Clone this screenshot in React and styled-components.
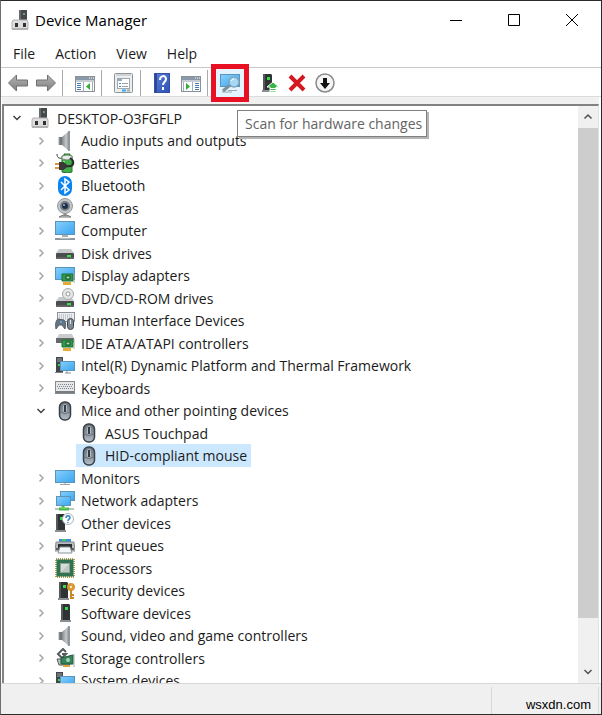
import React from "react";
import styled, { createGlobalStyle } from "styled-components";

const Color = {
  TEXT: "#1b1b1b",
  LINE: "#c8c8c8",
  FACE: "#f0f0f0",
  EDGE: "#828282",
  FRAME: "#2b2b2b",
  SELECTED: "#cce8ff",
  HOVER: "#e5f3ff",
  MARK: "#e81123",
};

const GlobalStyle = createGlobalStyle`
  * {
    box-sizing: border-box;
  }
  body {
    margin: 0;
    color: ${Color.TEXT};
    font-family: "Open Sans", "Noto Sans", sans-serif;
    font-size: 14px;
  }
  button {
    padding: 0;
    border: 0;
    background: none;
    color: inherit;
    font: inherit;
  }
  svg {
    display: block;
    flex: none;
  }
`;

const Window = styled.div`
  display: flex;
  flex-direction: column;
  height: 100vh;
  overflow: hidden;
  background: white;
  border: 1px solid ${Color.FRAME};
  border-left-color: #6e6e6e;
`;

const TitleBar = styled.header`
  display: flex;
  align-items: center;
  height: 38px;
  flex: none;
  padding-left: 10px;
`;

const Title = styled.h1`
  margin: 0;
  padding-left: 4px;
  flex: 1;
  color: black;
  font-size: 15px;
  font-weight: 400;
`;

const CaptionButton = styled.button`
  display: flex;
  align-items: center;
  justify-content: center;
  width: 58px;
  height: 38px;
`;

const MenuBar = styled.nav`
  display: flex;
  align-items: center;
  gap: 20px;
  height: 28px;
  flex: none;
  padding: 2px 0 0 12px;
`;

const MenuItem = styled.button`
  line-height: 20px;
`;

const ToolBar = styled.div`
  display: flex;
  align-items: center;
  gap: 8px;
  height: 30px;
  flex: none;
  padding: 1px 0 0 7px;
  border-top: 1px solid ${Color.LINE};
  border-bottom: 1px solid #dcdcdc;
`;

const ToolButton = styled.button`
  position: relative;
  width: 20px;
  height: 20px;
`;

const MarkedButton = styled(ToolButton)`
  background: ${Color.HOVER};
  box-shadow: 0 0 0 4px ${Color.HOVER};
  &::after {
    content: "";
    position: absolute;
    inset: -9px;
    border: 5px solid ${Color.MARK};
  }
`;

const Separator = styled.span`
  width: 1px;
  height: 26px;
  margin: 0 4px 0 -2px;
  background: ${(props) => (props.$blank ? "transparent" : "#a9a9a9")};
`;

const Tooltip = styled.span`
  position: absolute;
  z-index: 2;
  top: 37px;
  left: 17px;
  padding: 0 4px 0 7px;
  border: 1px solid #808080;
  background: white;
  box-shadow: 2px 2px 0 #b4b4b4;
  color: #646464;
  line-height: 25px;
  white-space: nowrap;
`;

const Content = styled.main`
  display: flex;
  flex: 1;
  min-height: 0;
  margin: 0 2px 0 1px;
  border-top: 7px solid ${Color.FACE};
`;

const Pane = styled.div`
  display: flex;
  flex: 1;
  min-width: 0;
  border-top: 2px solid ${Color.EDGE};
  border-left: 2px solid ${Color.EDGE};
  border-right: 1px solid #e3e3e3;
`;

const Tree = styled.ul`
  flex: 1;
  margin: 0;
  padding: 1px 0 0;
  overflow: hidden;
  list-style: none;
`;

const Row = styled.li`
  display: flex;
  align-items: center;
  height: 22px;
  padding-left: ${(props) => 6 + props.$level * 24}px;
  &:nth-child(even) {
    height: 23px;
  }
`;

const Expander = styled.button`
  display: flex;
  justify-content: center;
  width: 14px;
  margin-right: 4px;
`;

const Item = styled.span`
  display: flex;
  align-items: center;
  gap: 6px;
  height: 100%;
  padding: 0 4px 0 3px;
  background: ${(props) => (props.$selected ? Color.SELECTED : "none")};
  white-space: nowrap;
`;

const ScrollBar = styled.div`
  display: flex;
  flex-direction: column;
  width: 20px;
  background: ${Color.FACE};
`;

const ScrollButton = styled.button`
  display: flex;
  align-items: center;
  justify-content: center;
  height: 22px;
`;

const Track = styled.div`
  flex: 1;
`;

const Thumb = styled.div`
  height: 92%;
  background: #cdcdcd;
`;

const StatusBar = styled.footer`
  display: flex;
  height: 31px;
  flex: none;
  padding: 3px 2px 0 0;
  background: ${Color.FACE};
  border-top: 1px solid #d7d7d7;
`;

const StatusCell = styled.div`
  flex: ${(props) => (props.$wide ? "1" : "0 0 107px")};
  padding: 9px 7px 0 0;
  border-right: 1px solid #d9d9d9;
  color: black;
  font-family: "Liberation Sans", Arial, sans-serif;
  font-size: 13px;
  line-height: 18px;
  text-align: right;
`;

const Svg = ({ children, size = 20 }) => (
  <svg width={size} height={size} viewBox={`0 0 ${size} ${size}`} aria-hidden="true">
    {children}
  </svg>
);

const Defs = styled.svg`
  position: absolute;
`;

const Gradients = () => (
  <Defs width="0" height="0" aria-hidden="true">
    <defs>
      <linearGradient id="screen" x1="0" y1="0" x2="1" y2="1">
        <stop offset="0" stopColor="#86d0fc" />
        <stop offset="1" stopColor="#3aa5f0" />
      </linearGradient>
      <linearGradient id="metal" x1="0" y1="0" x2="1" y2="0">
        <stop offset="0" stopColor="#85898d" />
        <stop offset="0.6" stopColor="#c3c8cc" />
        <stop offset="1" stopColor="#868b90" />
      </linearGradient>
      <linearGradient id="mouse" x1="0" y1="0" x2="0" y2="1">
        <stop offset="0" stopColor="#6d7680" />
        <stop offset="0.5" stopColor="#87929d" />
        <stop offset="1" stopColor="#b5c0ca" />
      </linearGradient>
      <linearGradient id="arrow" x1="0" y1="0" x2="0" y2="1">
        <stop offset="0" stopColor="#b5b5b5" />
        <stop offset="1" stopColor="#7e7e7e" />
      </linearGradient>
      <linearGradient id="help" x1="0" y1="0" x2="1" y2="1">
        <stop offset="0" stopColor="#5d7fd8" />
        <stop offset="1" stopColor="#2c50b8" />
      </linearGradient>
    </defs>
  </Defs>
);

// small parts shared by several icons
const Screen = ({ x, y, w, h }) => (
  <rect x={x + 0.5} y={y + 0.5} width={w - 1} height={h - 1} fill="url(#screen)" stroke="#5c93b8" />
);

const Tower = ({ x }) => (
  <g>
    <path d={`M${x} 1h8l1 1v15h-9z`} fill="#303335" />
    <path d={`M${x} 1h2v16h-2z`} fill="#54595c" />
    <path d={`M${x - 1} 17h11v2h-11z`} fill="#8b8f92" />
    <path d={`M${x + 4} 4h3v3h-3z`} fill="#35dc4a" />
  </g>
);

const Drive = ({ y }) => (
  <g>
    <path d={`M4 ${y}h12l3 4h-18z`} fill="#c6c8c9" />
    <rect x="1" y={y + 4} width="18" height="6" rx="1" fill="#4a4d4f" />
    <path d={`M2 ${y + 9}h16`} stroke="#777b7d" />
    <path d={`M12 ${y + 7}h4`} stroke="#3be04c" strokeWidth="2" />
  </g>
);

const Card = ({ x, y }) => (
  <g>
    <path d={`M${x} ${y}h11v7h-11z`} fill="#2f9a4b" stroke="#1d7036" />
    <path d={`M${x + 4} ${y + 2}h4v3h-4z`} fill="#a7d8ac" stroke="#174d2a" />
    <path d={`M${x + 1} ${y + 8}h8v3h-8z`} fill="#e8ac35" />
    <path d={`M${x + 12} ${y - 1}v10`} stroke="#a4aaa7" />
  </g>
);

const ComputerIcon = () => (
  <Svg>
    <rect x="8" y="0" width="8" height="11" fill="#45494b" />
    <path d="M8 0h2v11h-2z" fill="#666b6e" />
    <path d="M12 3h2v2h-2z" fill="#7f9486" />
    <path d="M2 10h14l1 2v7h-16v-7z" fill="#dedede" stroke="#b0b0b0" />
    <path d="M1 18h16v2h-16z" fill="#b2b2b2" />
    <path d="M4 13h3v4h-3zM12 13h3v4h-3z" fill="#2f3234" />
  </Svg>
);

const SpeakerIcon = () => (
  <Svg>
    <path d="M4 6h4v8h-4z" fill="#6f757a" />
    <path d="M7 6l7-6v20l-7-6z" fill="url(#metal)" />
    <path d="M13 0h2v20h-2z" fill="#92979b" />
    <path d="M4 6v8" stroke="#9ea4a8" />
  </Svg>
);

const BatteryIcon = () => (
  <Svg>
    <path d="M2 1c0 4 3 5 6 4" fill="none" stroke="#333" />
    <path d="M9 1h6v2h2v16q-5 2-10 0v-16h2z" fill="#3fae49" stroke="#286f30" />
    <path d="M7 3q5-2 10 0v3q-5 2-10 0z" fill="#e4eee4" stroke="#758b78" />
    <path d="M9 8v9" stroke="#92dc8d" strokeWidth="2" />
    <path d="M0 11h5M0 15h5" stroke="#d89642" strokeWidth="2" />
    <path d="M4 9h5l3 3v2l-3 3h-5z" fill="#3b3938" />
    <path d="M11 13c6 1 8-1 7-5-1-2-2-2-3-3" fill="none" stroke="#2b2b2b" strokeWidth="2" />
  </Svg>
);

const BluetoothIcon = () => (
  <Svg>
    <rect x="3" y="0" width="14" height="20" rx="7" fill="#0a84f0" />
    <path d="M6 6l8 8-4 3v-14l4 3-8 8" fill="none" stroke="white" strokeWidth="1.5" />
  </Svg>
);

const CameraIcon = () => (
  <Svg>
    <path d="M4 19q6-4 12 0z" fill="#d5d5d5" stroke="#777" />
    <path d="M10 14v4" stroke="#888" strokeWidth="3" />
    <circle cx="10" cy="8" r="7.5" fill="#c3c6c8" stroke="#94989b" />
    <circle cx="10" cy="8" r="5" fill="#777f85" />
    <circle cx="10" cy="8" r="3" fill="#1f3147" />
    <circle cx="9" cy="7" r="1" fill="#8bbcf0" />
  </Svg>
);

const DesktopIcon = () => (
  <Svg>
    <Screen x={0} y={0} w={20} h={14} />
    <path d="M7 15h6" stroke="#aab2b7" strokeWidth="2" />
    <path d="M0 18h20" stroke="#8d979e" strokeWidth="2" />
    <path d="M5 17h10" stroke="#dce2e5" />
  </Svg>
);

const DiskIcon = () => (
  <Svg>
    <Drive y={6} />
  </Svg>
);

const DisplayIcon = () => (
  <Svg>
    <Screen x={0} y={1} w={20} h={13} />
    <Card x={7} y={8} />
  </Svg>
);

const DiscIcon = () => (
  <Svg>
    <Drive y={9} />
    <circle cx="13" cy="6" r="5.5" fill="#e5e6e6" stroke="#a4a7a9" />
    <circle cx="13" cy="6" r="2" fill="white" stroke="#95999b" />
  </Svg>
);

const HidIcon = () => (
  <Svg>
    <rect x="2.5" y="1.5" width="17" height="9" fill="#eceeef" stroke="#8b9299" />
    <path d="M4 4h14M4 6h14M4 8h14" stroke="#9da4aa" strokeDasharray="1 1" />
    <path d="M1 18c-1-5 0-9 2-10l6 1c2 2 2 6 1 9l-3-4h-3z" fill="#66747f" stroke="#55626d" />
    <circle cx="6" cy="11" r="1" fill="#4fb7fa" />
    <rect x="12.5" y="7.5" width="6" height="11" rx="3" fill="#7f8993" stroke="#3e454c" />
    <path d="M15.5 9v4" stroke="#e3e8ec" />
  </Svg>
);

const IdeIcon = () => (
  <Svg>
    <path d="M4 1h13l2 4h-17z" fill="#c9cbcc" />
    <path d="M1 5h18v5h-18z" fill="#66696c" />
    <Card x={7} y={7} />
  </Svg>
);

const SystemIcon = () => (
  <Svg>
    <path d="M1 1h7v15h-7z" fill="#41474b" />
    <path d="M2 3h5M2 5h5" stroke="#9ba2a7" />
    <path d="M3 8h2v2h-2z" fill="#39d34e" />
    <path d="M0 16h8v1h-8z" fill="#7b8083" />
    <Screen x={5} y={5} w={15} h={10} />
    <path d="M10 17h6M12 15v2" stroke="#7e929f" />
  </Svg>
);

const KeyboardIcon = () => (
  <Svg>
    <rect x="0.5" y="3.5" width="19" height="12" fill="#e6e7e8" stroke="#858a8f" />
    <path d="M3 6.5h15M2 8.5h16M3 10.5h15" stroke="#7f868c" strokeDasharray="1 1" />
    <path d="M1 14h18" stroke="#777c81" strokeWidth="2" />
  </Svg>
);

const MouseIcon = () => (
  <Svg>
    <rect x="4.5" y="1" width="11" height="18" rx="5" fill="url(#mouse)" stroke="#3a4046" strokeWidth="1.5" />
    <path d="M5 11q5 3 10 0" fill="none" stroke="#69727a" />
    <rect x="8.5" y="3.5" width="3" height="8" rx="1" fill="#343b42" stroke="#b6bdc2" />
  </Svg>
);

const MonitorIcon = () => (
  <Svg>
    <Screen x={0} y={2} w={20} h={13} />
    <path d="M10 15v2M5 16.5h10" stroke="#9aa4aa" />
  </Svg>
);

const NetworkIcon = () => (
  <Svg>
    <Screen x={5} y={0} w={15} h={10} />
    <Screen x={1} y={5} w={15} h={10} />
    <path d="M0 18h19" stroke="#b9c6bb" strokeWidth="2" />
    <path d="M8 15v2M4 18h10" stroke="#46b947" strokeWidth="3" />
    <path d="M6 17h6" stroke="#8ce28a" />
  </Svg>
);

const OtherIcon = () => (
  <Svg>
    <Tower x={1} />
    <circle cx="13" cy="6" r="5.5" fill="white" stroke="#aeb3b6" />
    <path d="M11 5c0-3 4-3 4 0 0 1-2 1-2 3M13 9v1" fill="none" stroke="#3288c6" strokeWidth="1.5" />
  </Svg>
);

const PrinterIcon = () => (
  <Svg>
    <path d="M4 3h12v5h-12z" fill="#3c8fce" />
    <path d="M7 3h4v2h-4z" fill="#4bc26d" />
    <path d="M1 6h18l1 9h-20z" fill="#b9bdc0" stroke="#8a8e91" />
    <path d="M3 8h14v4h-14z" fill="#2d3031" />
    <path d="M5 11h10l2 6h-14z" fill="#f4f7f9" stroke="#8d9397" />
    <path d="M1 13h3M16 13h3" stroke="#5c6063" strokeWidth="2" />
  </Svg>
);

const ChipIcon = () => (
  <Svg>
    <rect x="1" y="1" width="18" height="18" fill="none" stroke="#b69d4c" strokeWidth="2" strokeDasharray="1 1" />
    <rect x="1.5" y="1.5" width="17" height="17" fill="#2f7350" />
    <rect x="5.5" y="5.5" width="9" height="9" fill="#d8dcd9" stroke="#8da397" />
    <path d="M6 14l8-8v8z" fill="#bfc7c2" />
  </Svg>
);

const SecurityIcon = () => (
  <Svg>
    <Tower x={4} />
    <circle cx="16" cy="6" r="2.5" fill="none" stroke="#d99a35" strokeWidth="3" />
    <path d="M16 9v9M16 14h3M16 17h3" stroke="#c98728" strokeWidth="2" />
  </Svg>
);

const SoftwareIcon = () => (
  <Svg>
    <Tower x={6} />
  </Svg>
);

const StorageIcon = () => (
  <Svg>
    <path d="M7 10l-4-4 5-5 3 3M7 6h4l-4 4" fill="none" stroke="#565a5d" strokeWidth="2" />
    <path d="M2 11h10l3 6h-11z" fill="#bec1c2" stroke="#575b5e" />
    <path d="M6 10l12-3v9h-12z" fill="#36865a" stroke="#1c573b" />
    <circle cx="13" cy="12" r="2" fill="#a7cfb5" />
    <path d="M8 17h7v2h-7z" fill="#e1a23b" />
    <path d="M19 6v13" stroke="#9fa6a5" />
  </Svg>
);

const BackIcon = () => (
  <Svg>
    <path d="M0.5 10l8-8v5h11v6h-11v5z" fill="url(#arrow)" stroke="#707070" />
  </Svg>
);

const ForwardIcon = () => (
  <Svg>
    <path d="M19.5 10l-8-8v5h-11v6h11v5z" fill="url(#arrow)" stroke="#707070" />
  </Svg>
);

const ConsolePanel = ({ children }) => (
  <Svg>
    <rect x="0.5" y="3.5" width="19" height="15" fill="#fafcfe" stroke="#8b9197" />
    <path d="M1 4h18v3h-18z" fill="#8a99a9" />
    <path d="M14 5h1M16 5h1M18 5h1" stroke="white" />
    <path d="M1 8h18" stroke="#c5ccd2" strokeWidth="2" />
    {children}
  </Svg>
);

const ShowTreeIcon = () => (
  <ConsolePanel>
    <path d="M2 10.5h4M2 12.5h4M2 14.5h4M2 16.5h4" stroke="#437bb7" />
    <path d="M8.5 9v9M17.5 9v9" stroke="#a3adb5" />
    <path d="M15 10v7l-4-3.5z" fill="#35ad37" />
  </ConsolePanel>
);

const ActionPaneIcon = () => (
  <ConsolePanel>
    <path d="M14 10.5h4M14 12.5h4M14 14.5h4M14 16.5h4" stroke="#437bb7" />
    <path d="M11.5 9v9M2.5 9v9" stroke="#a3adb5" />
    <path d="M5 10v7l4-3.5z" fill="#35ad37" />
  </ConsolePanel>
);

const PropertiesIcon = () => (
  <Svg>
    <rect x="0.5" y="0.5" width="18" height="19" rx="1" fill="#eceeef" stroke="#8f9498" />
    <path d="M2 2h15" stroke="#b5babe" />
    <rect x="3.5" y="5.5" width="12" height="10" fill="white" stroke="#a0a7ad" />
    <path d="M4 6h4v2h-4z" fill="#9aa9b7" />
    <path d="M5 10.5h2M5 13.5h2" stroke="#3d91d0" />
    <path d="M8 10.5h6M8 13.5h6" stroke="#9ba0a4" />
    <path d="M8 17.5h4" stroke="#2daaf0" strokeWidth="2" />
    <path d="M13 17.5h3" stroke="#a4a9ad" strokeWidth="2" />
  </Svg>
);

const HelpIcon = () => (
  <Svg>
    <rect x="1.5" y="0.5" width="15" height="19" fill="url(#help)" stroke="#35519f" />
    <path d="M2 1h2v18h-2z" fill="#2b479d" />
    <path d="M7 7c0-5 6-5 6-1 0 3-3 3-3 6M10 14v3" fill="none" stroke="white" strokeWidth="2" />
  </Svg>
);

const ScanIcon = () => (
  <Svg>
    <Screen x={0} y={1} w={20} h={13} />
    <path d="M8 17.5h9M2 19h10" stroke="#9aa8b2" />
    <path d="M10 12l-7 6" stroke="#78909f" strokeWidth="3" />
    <circle cx="14" cy="9" r="5" fill="#a6d9f5" stroke="#7fa7bd" strokeWidth="1.5" />
    <path d="M11 8q1-2 3-2" fill="none" stroke="white" />
  </Svg>
);

const UpdateIcon = () => (
  <Svg>
    <Tower x={4} />
    <path d="M14 9l6 5h-3v5h-6v-5h-3z" fill="#36b546" stroke="white" />
    <path d="M11 15.5h6M11 17.5h6" stroke="white" />
  </Svg>
);

const RemoveIcon = () => (
  <Svg>
    <path d="M3 3l14 14M17 3l-14 14" stroke="#d3191f" strokeWidth="4" />
  </Svg>
);

const DisableIcon = () => (
  <Svg>
    <circle cx="10" cy="10" r="9" fill="#f5f5f5" stroke="#8a8a8a" strokeWidth="1.5" />
    <path d="M8 5h4v5h3l-5 6-5-6h3z" fill="#111" />
  </Svg>
);

const Chevron = ({ d, color }) => (
  <Svg size={10}>
    <path d={d} fill="none" stroke={color} strokeWidth="1.5" />
  </Svg>
);

const DEVICES = [
  { name: "DESKTOP-O3FGFLP", icon: ComputerIcon, level: 0, open: true },
  { name: "Audio inputs and outputs", icon: SpeakerIcon },
  { name: "Batteries", icon: BatteryIcon },
  { name: "Bluetooth", icon: BluetoothIcon },
  { name: "Cameras", icon: CameraIcon },
  { name: "Computer", icon: DesktopIcon },
  { name: "Disk drives", icon: DiskIcon },
  { name: "Display adapters", icon: DisplayIcon },
  { name: "DVD/CD-ROM drives", icon: DiscIcon },
  { name: "Human Interface Devices", icon: HidIcon },
  { name: "IDE ATA/ATAPI controllers", icon: IdeIcon },
  { name: "Intel(R) Dynamic Platform and Thermal Framework", icon: SystemIcon },
  { name: "Keyboards", icon: KeyboardIcon },
  { name: "Mice and other pointing devices", icon: MouseIcon, open: true },
  { name: "ASUS Touchpad", icon: MouseIcon, level: 2 },
  { name: "HID-compliant mouse", icon: MouseIcon, level: 2, selected: true },
  { name: "Monitors", icon: MonitorIcon },
  { name: "Network adapters", icon: NetworkIcon },
  { name: "Other devices", icon: OtherIcon },
  { name: "Print queues", icon: PrinterIcon },
  { name: "Processors", icon: ChipIcon },
  { name: "Security devices", icon: SecurityIcon },
  { name: "Software devices", icon: SoftwareIcon },
  { name: "Sound, video and game controllers", icon: SpeakerIcon },
  { name: "Storage controllers", icon: StorageIcon },
  { name: "System devices", icon: SystemIcon },
];

const DeviceRow = ({ name, icon: Icon, level = 1, open, selected }) => (
  <Row $level={level} role="treeitem" aria-level={level + 1} aria-selected={!!selected}>
    <Expander
      as={level === 2 ? "span" : "button"}
      aria-label={level === 2 ? undefined : `${open ? "Collapse" : "Expand"} ${name}`}
    >
      {level < 2 &&
        (open ? (
          <Chevron d="M1.5 3l3.5 3.5 3.5-3.5" color="#404040" />
        ) : (
          <Chevron d="M3.5 1.5l3.5 3.5-3.5 3.5" color="#a6a6a6" />
        ))}
    </Expander>
    <Item $selected={selected}>
      <Icon />
      {name}
    </Item>
  </Row>
);

export default () => (
  <Window>
    <GlobalStyle />
    <Gradients />
    <TitleBar>
      <ComputerIcon />
      <Title>Device Manager</Title>
      <CaptionButton aria-label="Minimize">
        <Svg size={12}>
          <path d="M0 6.5h12" stroke="black" />
        </Svg>
      </CaptionButton>
      <CaptionButton aria-label="Maximize">
        <Svg size={12}>
          <path d="M0.5 0.5h11v11h-11z" fill="none" stroke="black" />
        </Svg>
      </CaptionButton>
      <CaptionButton aria-label="Close">
        <Svg size={12}>
          <path d="M0 0l12 12M12 0l-12 12" stroke="black" />
        </Svg>
      </CaptionButton>
    </TitleBar>
    <MenuBar>
      <MenuItem>File</MenuItem>
      <MenuItem>Action</MenuItem>
      <MenuItem>View</MenuItem>
      <MenuItem>Help</MenuItem>
    </MenuBar>
    <ToolBar role="toolbar">
      <ToolButton aria-label="Back">
        <BackIcon />
      </ToolButton>
      <ToolButton aria-label="Forward">
        <ForwardIcon />
      </ToolButton>
      <Separator />
      <ToolButton aria-label="Show/Hide Console Tree">
        <ShowTreeIcon />
      </ToolButton>
      <Separator />
      <ToolButton aria-label="Properties">
        <PropertiesIcon />
      </ToolButton>
      <Separator />
      <ToolButton aria-label="Help">
        <HelpIcon />
      </ToolButton>
      <ToolButton aria-label="Show/Hide Action Pane">
        <ActionPaneIcon />
      </ToolButton>
      <Separator />
      <MarkedButton aria-labelledby="scan-tip">
        <ScanIcon />
        <Tooltip id="scan-tip" role="tooltip">
          Scan for hardware changes
        </Tooltip>
      </MarkedButton>
      <Separator $blank />
      <ToolButton aria-label="Update driver">
        <UpdateIcon />
      </ToolButton>
      <ToolButton aria-label="Uninstall device">
        <RemoveIcon />
      </ToolButton>
      <ToolButton aria-label="Disable device">
        <DisableIcon />
      </ToolButton>
    </ToolBar>
    <Content>
      <Pane>
        <Tree role="tree">
          {DEVICES.map((device) => (
            <DeviceRow key={device.name} {...device} />
          ))}
        </Tree>
        <ScrollBar>
          <ScrollButton aria-label="Scroll up">
            <Chevron d="M1.5 6.5l3.5-3.5 3.5 3.5" color="#505050" />
          </ScrollButton>
          <Track>
            <Thumb />
          </Track>
          <ScrollButton aria-label="Scroll down">
            <Chevron d="M1.5 3l3.5 3.5 3.5-3.5" color="#505050" />
          </ScrollButton>
        </ScrollBar>
      </Pane>
    </Content>
    <StatusBar>
      <StatusCell $wide />
      <StatusCell>wsxdn.com</StatusCell>
    </StatusBar>
  </Window>
);
